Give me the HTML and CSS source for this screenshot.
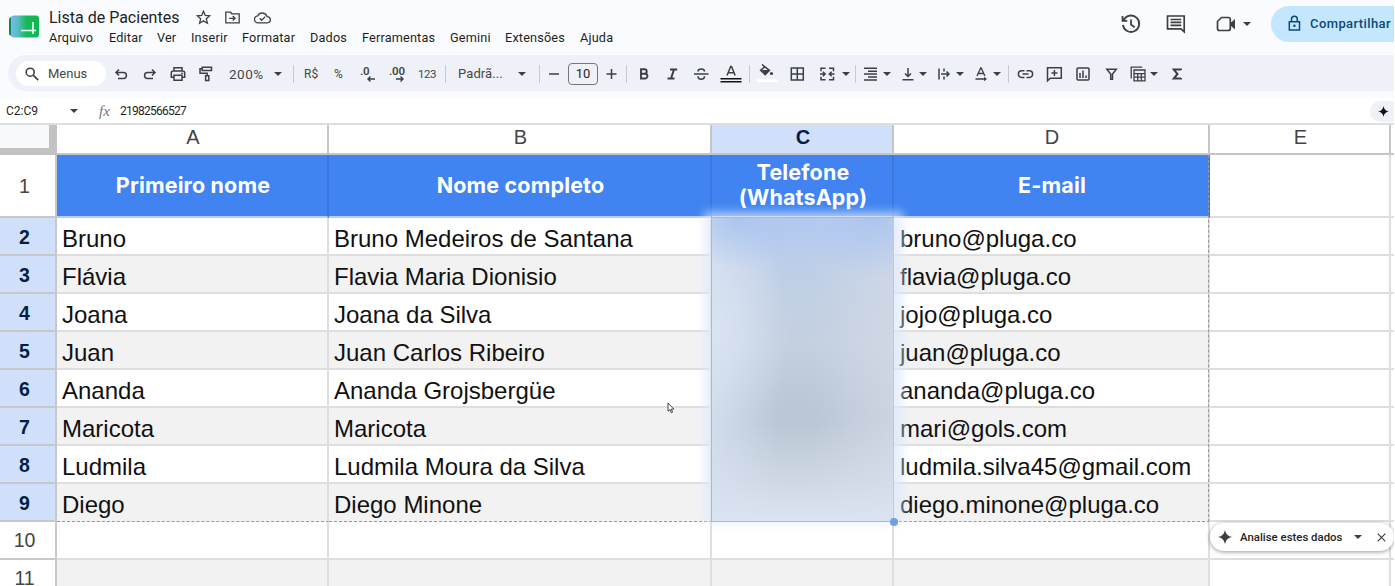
FILE: index.html
```html
<!DOCTYPE html>
<html lang="pt-BR">
<head>
<meta charset="utf-8">
<title>Lista de Pacientes</title>
<link rel="stylesheet" href="styles.css">
</head>
<body>
<div class="app">
  <header class="top">
    <svg class="logo" width="31" height="23" viewBox="0 0 31 23"><defs><linearGradient id="lg" x1="0" x2="1"><stop offset="0" stop-color="#77b9f5"/><stop offset=".25" stop-color="#58bdc0"/><stop offset=".55" stop-color="#14b95b"/><stop offset="1" stop-color="#12b653"/></linearGradient></defs><rect class="plain" x="0" y="2" width="10" height="19" rx="3" fill="#128a43"/><rect class="plain" x="2" y="0.500" width="28" height="22" rx="3" fill="url(#lg)"/><path d="M12 15.500h15M24 7v12" stroke="#e9fff2" stroke-width="1.700" fill="none"/></svg>
    <div class="titles">
      <div class="title-row"><span class="title">Lista de Pacientes</span>
        <svg class="i15" viewBox="0 0 15 15"><path d="M7.500 1.200l1.750 4.200 4.550.4-3.450 3 1.050 4.400-3.900-2.350-3.900 2.350 1.050-4.400-3.450-3 4.550-.4z" stroke-width="1.300"/></svg>
        <svg class="i15" viewBox="0 0 15 15"><path d="M.8 2.200h4.700l1.400 1.600h7.300v9H.8zM4.200 8.300h5.500M7.700 6l2.400 2.300-2.400 2.300" stroke-width="1.300"/></svg>
        <svg class="i17" viewBox="0 0 17 15"><path d="M4.300 12.800a3.500 3.500 0 0 1-.5-7 5 5 0 0 1 9.300.8 3.100 3.100 0 0 1 .2 6.200zM5.700 8.300l2 2 3.500-3.700" stroke-width="1.300"/></svg>
      </div>
      <nav class="menu"><span>Arquivo</span><span>Editar</span><span>Ver</span><span>Inserir</span><span>Formatar</span><span>Dados</span><span>Ferramentas</span><span>Gemini</span><span>Extensões</span><span>Ajuda</span></nav>
    </div>
    <div class="actions">
      <svg width="20" height="20" viewBox="0 0 20 20"><path d="M2.700 6A8.200 8.200 0 1 1 1.900 11M1.500 2v4.800h4.800M10 5.500v5l3.600 2.800" stroke-width="1.800"/></svg>
      <svg width="20" height="20" viewBox="0 0 20 20"><path d="M1.500 2h16.700v15.800l-3.200-2.900H1.500zM4.500 5.500h10.800M4.500 8.400h10.800M4.500 11.300h10.800" stroke-width="1.700"/></svg>
      <svg width="20" height="18" viewBox="0 0 20 18"><path d="M5.500 2.500h6.800a2 2 0 0 1 2 2v9a2 2 0 0 1-2 2H3.500a2 2 0 0 1-2-2V6.500z" stroke-width="1.700"/><path class="f" d="M14.500 8l4.500-4v10.500l-4.500-4z"/></svg>
      <i class="caret"></i>
      <button class="share"><svg width="13" height="17" viewBox="0 0 13 17"><path d="M1.300 6.700h10.200v8.300H1.300zM3.500 6.500V4.200a2.900 2.900 0 0 1 5.800 0v2.300" stroke="#0b4a77" stroke-width="1.500"/><circle class="plain" cx="6.400" cy="10.800" r="1.300" fill="#0b4a77"/></svg><span>Compartilhar</span></button>
    </div>
  </header>

  <div class="toolbar">
    <div class="search"><svg width="14" height="14" viewBox="0 0 14 14"><circle cx="5.200" cy="5.200" r="4" stroke-width="1.600"/><path d="M8.200 8.200l5 5" stroke-width="1.700"/></svg><span>Menus</span></div>
    <svg class="ic" viewBox="0 0 18 18"><path d="M7 4.500L4 7.500l3 3M4.200 7.500h7.300a2.900 2.900 0 0 1 0 5.900H6"/></svg>
    <svg class="ic" viewBox="0 0 18 18"><path d="M11 4.500l3 3-3 3M13.800 7.500H6.500a2.900 2.900 0 0 0 0 5.900H12"/></svg>
    <svg class="ic" viewBox="0 0 18 18"><path d="M5 6V2.700h8V6M5 12.300H2.300V8a2 2 0 0 1 2-2h9.400a2 2 0 0 1 2 2v4.300H13M5 10.300h8v5H5z"/><circle class="f" cx="13" cy="8.300" r=".9"/></svg>
    <svg class="ic" viewBox="0 0 18 18"><path d="M5.200 2.200h9.300v3.400H5.200zM5.200 3.800H3v4.500h7.200v2.300M8.600 10.800h3.200v4.800H8.600z"/></svg>
    <span class="txt zoomtx">200%</span><i class="caret"></i><i class="sep"></i>
    <span class="txt small">R$</span><span class="txt small">%</span>
    <span class="dec"><b>.0</b><svg width="8" height="6" viewBox="0 0 8 6"><path d="M8 3H1M3.500.5L1 3l2.500 2.500"/></svg></span>
    <span class="dec dec2"><b>.00</b><svg width="8" height="6" viewBox="0 0 8 6"><path d="M0 3h7M4.500.5L7 3 4.500 5.500"/></svg></span>
    <span class="txt num">123</span><i class="sep"></i>
    <span class="txt fontname">Padrã...</span><i class="caret"></i><i class="sep"></i>
    <svg class="ic" viewBox="0 0 18 18"><path d="M4 9h10"/></svg>
    <span class="size">10</span>
    <svg class="ic" viewBox="0 0 18 18"><path d="M4.500 9h10M9.500 4v10"/></svg><i class="sep"></i>
    <svg class="ic" viewBox="0 0 18 18"><path d="M6 4.300h3.500a2.200 2.200 0 0 1 0 4.400H6zM6 8.700h4a2.400 2.400 0 0 1 0 4.800H6z" stroke-width="1.900"/></svg>
    <svg class="ic" viewBox="0 0 18 18"><path d="M7 4.500h7.200M4.500 13.500h7M11 4.500l-3 9" stroke-width="2"/></svg>
    <svg class="ic" viewBox="0 0 18 18"><path d="M2 9h14.500M12.500 6.500c0-3.300-6.500-3.300-6.500 0M12.500 11.300c0 4-6.500 4-6.500 0" stroke-width="1.500"/></svg>
    <svg class="letter" width="22" height="20" viewBox="0 0 22 20"><path d="M7 11.500l3.700-9h.8l3.700 9M8.300 8.800h5.700" stroke-width="1.500"/><path d="M.5 14.800h21M.5 17.800h21" stroke="#111" stroke-width="1.400"/></svg><i class="sep"></i>
    <svg class="letter" width="20" height="20" viewBox="0 0 20 20"><path class="f" d="M4.300 6h8.400l-4.200 4.400z"/><path d="M5 .5l7.400 5.800-4.200 4.400-4.600-4.500 4.300-3.400" stroke-width="1.500"/><circle class="f" cx="14.500" cy="9.500" r="1.600"/><path d="M0 16.500h20" stroke="#fff" stroke-width="3"/></svg>
    <svg class="ic" viewBox="0 0 18 18"><path d="M3.300 3h12v12h-12zM9.300 3v12M3.300 9h12"/></svg>
    <svg class="ic" viewBox="0 0 18 18"><path d="M7.500 3.200H3v3M11 3.200h4.500v3M7.500 14.800H3v-3M11 14.800h4.500v-3M2 9h5M4.800 6.700L7.200 9l-2.400 2.300M16.500 9h-5M13.700 6.700L11.300 9l2.400 2.300"/></svg>
    <i class="caret"></i><i class="sep"></i>
    <svg class="ic" viewBox="0 0 18 18"><path d="M3 3.300h13M7 6.200h9M3 9.100h13M7 12h9M3 14.900h13"/></svg><i class="caret"></i>
    <svg class="ic" viewBox="0 0 18 18"><path d="M9 3v8.500M6 8.500l3 3 3-3M3.500 14.700h11"/></svg><i class="caret"></i>
    <svg class="ic" viewBox="0 0 18 18"><path d="M4 3.500v11M9 3.500v3M9 11.500v3M6 9h8M11.500 6.500L14 9l-2.500 2.500"/></svg><i class="caret"></i>
    <svg class="ic" viewBox="0 0 18 18"><path d="M5 11l3.700-8h.5l3.700 8M6.300 8.500h5.300M3.500 14h10" stroke-width="1.300"/><path class="f" d="M12 11.700l3 2.300-3 2.300z"/></svg><i class="caret"></i><i class="sep"></i>
    <svg class="ic" viewBox="0 0 18 18"><path d="M8.500 5.800H5.700a3.300 3.300 0 0 0 0 6.600h2.800M10.500 5.800h2.800a3.300 3.300 0 0 1 0 6.600h-2.800M6.500 9.100h6"/></svg>
    <svg class="ic" viewBox="0 0 18 18"><path d="M2.500 2.700h13.800v10.500H5.300l-2.800 2.600zM9.400 5v6M6.400 8h6"/></svg>
    <svg class="ic" viewBox="0 0 18 18"><rect x="3" y="3" width="12" height="12" rx="1"/><path d="M6 8v5M9 5.500V13M12 10.500V13"/></svg>
    <svg class="ic" viewBox="0 0 18 18"><path d="M4.800 4.200h9.500L10.500 9v5.200H8.700V9z"/></svg>
    <svg class="ic" viewBox="0 0 18 18"><path d="M2.200 13.500V2.200h11M5 5h11v10.800H5zM5 8.600h11M5 12.200h11M8.700 8.600v7.200M12.300 8.600v7.200" stroke-width="1.300"/></svg><i class="caret"></i>
    <svg class="ic" viewBox="0 0 18 18"><path d="M13 5V4.600H5.800L9.500 9l-3.700 4.600H13V13" stroke-width="2"/></svg>
  </div>

  <div class="formula">
    <span class="ref">C2:C9</span><i class="caret"></i><span class="fx">fx</span><span class="val">21982566527</span>
    <span class="spark"><svg width="11" height="11" viewBox="0 0 14 14"><path class="plain" d="M7 0q.8 6.200 7 7-6.200.8-7 7-.8-6.200-7-7 6.200-.8 7-7z" fill="#111"/></svg></span>
  </div>

  <main class="sheet">
    <div class="row head"><div class="corner"></div><div>A</div><div>B</div><div class="sel">C</div><div>D</div><div>E</div><div></div></div>
    <div class="row blue"><div class="rh">1</div><div>Primeiro nome</div><div>Nome completo</div><div class="tel">Telefone<br>(WhatsApp)</div><div class="em">E-mail</div><div></div><div></div></div>
    <div class="row s"><div class="rh">2</div><div>Bruno</div><div>Bruno Medeiros de Santana</div><div></div><div>bruno@pluga.co</div><div></div><div></div></div>
    <div class="row s z"><div class="rh">3</div><div>Flávia</div><div>Flavia Maria Dionisio</div><div></div><div>flavia@pluga.co</div><div></div><div></div></div>
    <div class="row s"><div class="rh">4</div><div>Joana</div><div>Joana da Silva</div><div></div><div>jojo@pluga.co</div><div></div><div></div></div>
    <div class="row s z"><div class="rh">5</div><div>Juan</div><div>Juan Carlos Ribeiro</div><div></div><div>juan@pluga.co</div><div></div><div></div></div>
    <div class="row s"><div class="rh">6</div><div>Ananda</div><div>Ananda Grojsbergüe</div><div></div><div>ananda@pluga.co</div><div></div><div></div></div>
    <div class="row s z"><div class="rh">7</div><div>Maricota</div><div>Maricota</div><div></div><div>mari@gols.com</div><div></div><div></div></div>
    <div class="row s"><div class="rh">8</div><div>Ludmila</div><div>Ludmila Moura da Silva</div><div></div><div>ludmila.silva45@gmail.com</div><div></div><div></div></div>
    <div class="row s z last"><div class="rh">9</div><div>Diego</div><div>Diego Minone</div><div></div><div>diego.minone@pluga.co</div><div></div><div></div></div>
    <div class="row"><div class="rh">10</div><div></div><div></div><div></div><div></div><div></div><div></div></div>
    <div class="row z"><div class="rh">11</div><div></div><div></div><div></div><div></div><div></div><div></div></div>
  </main>

  <div class="edge"></div>
  <div class="haze"></div>
  <div class="redact"></div>
  <div class="handle"></div>
  <svg class="cursor" width="8" height="12" viewBox="0 0 8 12"><path d="M1 1v8.200l2-1.700 1.300 3.300 1.300-.6-1.300-3.100h2.500z" fill="#fff" stroke="#333" stroke-width=".9"/></svg>
  <div class="chip"><svg width="14" height="14" viewBox="0 0 14 14"><path class="f" d="M7 0q1.100 5.900 7 7-5.900 1.100-7 7-1.100-5.900-7-7 5.900-1.100 7-7z"/></svg><span>Analise estes dados</span><i class="caret"></i><svg width="9" height="9" viewBox="0 0 9 9"><path d="M.7.7l7.600 7.600M8.300.7L.7 8.300" stroke-width="1.200"/></svg></div>
</div>
</body>
</html>
```

FILE: styles.css
```css
* { box-sizing: border-box; }
body { margin: 0; background: #fff; }
.app { position: relative; width: 1394px; height: 586px; overflow: hidden; background: #f9fbfe; font-family: Roboto, "Liberation Sans", sans-serif; color: #1f1f1f; }
svg { display: block; fill: none; stroke: #3c4043; stroke-width: 1.5; flex: none; }
svg .f { fill: #3c4043; stroke: none; }
svg .plain { stroke: none; }
.caret { width: 0; height: 0; border: 4px solid transparent; border-top-color: #3c4043; border-bottom: 0; }

.top { display: flex; height: 55px; }
.logo { margin: 15px 0 0 9px; }
.titles { margin-left: 9px; }
.title-row { display: flex; align-items: center; height: 22px; margin-top: 6px; }
.title { width: 146px; font-size: 16px; letter-spacing: 0; white-space: nowrap; }
.i15 { width: 15px; height: 15px; margin-right: 14px; }
.title-row .i15:first-of-type { margin-left: 1px; }
.i17 { width: 17px; height: 15px; }
.menu { display: grid; grid-template-columns: 60px 48px 34px 51px 68px 52px 88px 55px 75px 50px; height: 18px; margin-top: 1px; line-height: 18px; font-size: 12.700px; letter-spacing: .17px; white-space: nowrap; }
.actions { display: flex; align-items: center; margin: 6px 0 0 auto; height: 36px; }
.actions svg:nth-of-type(2) { margin-left: 25px; }
.actions svg:nth-of-type(3) { margin-left: 30px; }
.actions .caret { margin: 0 20px 0 7px; }
.share { display: flex; align-items: center; gap: 9px; width: 123px; height: 36px; border: 0; padding: 0 0 2px 17px; border-radius: 18px 0 0 18px; background: #c2e7ff; color: #0b4a77; font: 500 13px Roboto, sans-serif; letter-spacing: .4px; }

.toolbar { display: grid; grid-template-columns: 96px 29px 28px 28px 32px 44px 20px 11px 30px 25px 29px 30px 27px 13px 59px 22px 6px 23px 34px 24px 9px 28px 29px 28px 29px 8px 31px 30px 23px 14px 6px 21px 17px 19px 17px 20px 17px 20px 16px 8px 29px 29px 28px 27px 20px 19px 18px; align-items: center; justify-items: start; margin-left: 8px; padding: 1px 0 0 8px; height: 36px; border-radius: 18px 0 0 18px; background: #eef2f8; color: #444746; }
.search { display: flex; align-items: center; gap: 9px; width: 90px; height: 25px; padding-left: 9px; border-radius: 13px; background: #fff; font-size: 13px; }
.ic { width: 18px; height: 18px; }
.toolbar .caret { margin-left: 1px; }
.sep { width: 1px; height: 18px; background: #c7cace; }
.txt { white-space: nowrap; }
.zoomtx { font-size: 13.500px; letter-spacing: .5px; }
.small { font-size: 12px; }
.num { font-size: 11.500px; letter-spacing: -.5px; }
.fontname { font-size: 13px; letter-spacing: .1px; }
.dec { width: 18px; height: 16px; padding-left: 1px; font-size: 11.500px; line-height: 10px; letter-spacing: -.2px; }
.dec b { display: block; font-weight: 600; }
.dec svg { margin-left: 7px; stroke-width: 1.400; }
.size { width: 30px; height: 22px; border: 1px solid #747775; border-radius: 4px; text-align: center; font-size: 13px; line-height: 20px; color: #222; }

.formula { display: flex; align-items: center; height: 26px; margin-top: 7px; background: #fff; padding-left: 6px; font-size: 11px; }
.ref { width: 64px; font-size: 12px; }
.fx { margin-left: 21px; width: 21px; font: italic 15px "Liberation Serif", serif; color: #777; }
.val { margin-top: -1px; font-size: 11.500px; letter-spacing: -.7px; }
.formula .val { letter-spacing: -.75px; font-size: 12px; }
.spark { display: flex; align-items: center; width: 24px; height: 21px; margin-left: auto; padding-left: 8px; border-radius: 11px 0 0 11px; background: #eef2f8; }

.sheet { background: #fff; border-top: 2px solid #dedede; margin-top: -1px; font-family: "Liberation Sans", Arial, sans-serif; }
.row { display: grid; grid-template-columns: 57px 272px 383px 182px 316px 181px 4px; height: 38px; }
.row > div { border-right: 2px solid #dedede; border-bottom: 2px solid #dedede; padding: 6px 0 0 5px; font-size: 24px; line-height: 30px; color: #111; white-space: nowrap; }
.row > div:nth-child(5) { padding-left: 6px; }
.row > div:last-child { border-right: 0; }
.row > .rh { border-color: #c6c8ca; padding: 0 6px 0 0; text-align: center; font-size: 19.500px; line-height: 37px; height: 38px; color: #444; }
.row.s > .rh { background: #d0e0fb; color: #041e49; font-weight: 700; line-height: 38px; }
.row.head { height: 30px; }
.row.head > div { border-color: #c4c6c8; padding: 0 0 0 2px; text-align: center; font-size: 20px; line-height: 25px; color: #444; }
.row.head > .corner { border: solid #c2c2c2; border-width: 0 8px 7px 0; background: #f8f9fa; }
.row.head > .sel { background: #d0e0fb; color: #041e49; font-weight: 700; }
.row.blue { height: 63px; }
.row.blue > .rh { height: 63px; line-height: 63px; }
.row.blue > div:nth-child(n+2):nth-child(-n+5) { background: #4083f1; border-color: #3b79df; border-bottom-color: #b9cdf0; padding: 0 0 0 2px; text-align: center; font: 700 21.500px/61px Inter, sans-serif; letter-spacing: .15px; color: #fff; }
.row.blue > .tel.tel.tel { line-height: 25px; padding-top: 5px; }
.row.z > div:nth-child(n+2):nth-child(-n+5) { background: #f2f2f2; }
.row.last > div:nth-child(n+2):nth-child(-n+5) { border-bottom: 1px dashed #999; }

.edge { position: absolute; left: 1208px; top: 155px; height: 367px; border-left: 1px dashed #999; }
.haze { position: absolute; left: 704px; top: 212px; width: 199px; height: 311px; background: rgba(222, 233, 250, .72); filter: blur(5px); }
.redact { position: absolute; left: 711px; top: 217px; width: 183px; height: 305px; border: 1px solid #9dbbe8; border-right-color: #bccbe2; background:
  radial-gradient(ellipse 75px 50px at 15% 0, rgba(168, 195, 240, .85), rgba(168, 195, 240, 0)),
  radial-gradient(ellipse 85px 60px at 90% 0, rgba(168, 195, 240, .85), rgba(168, 195, 240, 0)),
  radial-gradient(ellipse 80px 110px at 0 37%, rgba(222, 231, 244, .6), rgba(222, 231, 244, 0)),
  linear-gradient(to top, rgba(218, 227, 241, 1), rgba(216, 225, 238, .55) 13%, rgba(216, 225, 238, 0) 32%),
  linear-gradient(to right, rgba(214, 224, 240, .8), rgba(218, 227, 242, 0) 38%, rgba(212, 218, 231, 0) 55%, rgba(212, 218, 231, .7)),
  linear-gradient(to bottom, #b6cbef, #c0cfe5 22%, #c4d0df 42%, #bac6d5 64%, #bdc8d6 78%, #c8d1df); }
.handle { position: absolute; left: 890px; top: 518px; width: 8px; height: 8px; border-radius: 50%; background: #6f9ee4; }
.cursor { position: absolute; left: 667px; top: 402px; }
.chip { position: absolute; left: 1210px; top: 523px; width: 184px; height: 28px; display: flex; align-items: center; padding-left: 8px; border-radius: 14px; background: #fff; box-shadow: 0 1px 4px rgba(0, 0, 0, .4); font-size: 11.400px; font-weight: 500; }
.chip span { width: 106px; margin-left: 8px; white-space: nowrap; }
.chip .caret { margin: 0 15px 0 8px; }
```
